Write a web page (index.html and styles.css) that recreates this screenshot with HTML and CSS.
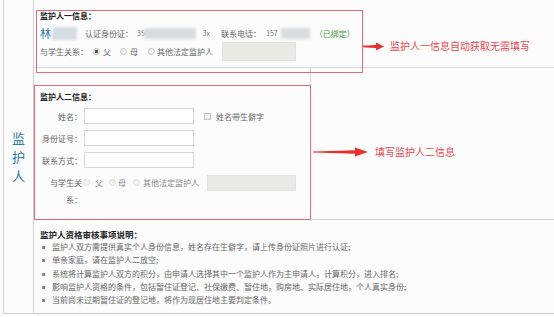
FILE: index.html
```html
<!DOCTYPE html>
<html lang="zh-CN">
<head>
  <meta charset="UTF-8">
  <title>监护人信息</title>
  <link rel="stylesheet" href="styles.css">
</head>
<body>
  <div class="hoja">
    <div class="tabla">
      <div class="lado"><span>监</span><span>护</span><span>人</span></div>

      <!-- 监护人一 -->
      <div class="fila1">
        <div class="info">
          <div class="titulo">监护人一信息：</div>
          <div class="linea">
            <span class="nombre">林</span>
            <span class="borroso b1"></span>
            <span class="etq e1">认证身份证：</span>
            <span class="num n1">350</span>
            <span class="borroso b2"></span>
            <span class="num n2">3x</span>
            <span class="etq e2">联系电话：</span>
            <span class="num n3">157</span>
            <span class="borroso b3"></span>
            <span class="verde">（已绑定）</span>
          </div>
          <div class="linea rel">
            <span class="etq">与学生关系：</span>
            <span class="radio on r1"></span><span class="op o1">父</span>
            <span class="radio r2"></span><span class="op o2">母</span>
            <span class="radio r3"></span><span class="op o3">其他法定监护人</span>
            <span class="caja c1"></span>
          </div>
        </div>
        <div class="aviso a1">
          <svg width="22" height="9" viewBox="0 0 22 9"><polygon points="0,3.8 14,3 14,0.5 22,4.5 14,8.5 14,6 0,5.2" fill="#e8302a"/></svg>
          <span>监护人一信息自动获取无需填写</span>
        </div>
      </div>

      <!-- 监护人二 -->
      <div class="fila2">
        <div class="titulo">监护人二信息：</div>
        <div class="campo">
          <span class="lbl">姓名：</span>
          <span class="input"></span>
          <span class="check"></span>
          <span class="op ck">姓名带生僻字</span>
        </div>
        <div class="campo">
          <span class="lbl">身份证号：</span>
          <span class="input"></span>
        </div>
        <div class="campo">
          <span class="lbl">联系方式：</span>
          <span class="input"></span>
        </div>
        <div class="campo rel2">
          <span class="lbl estrecho">与学生关系：</span>
          <div class="grupo">
            <span class="radio off q1"></span><span class="op gris p1">父</span>
            <span class="radio off q2"></span><span class="op gris p2">母</span>
            <span class="radio off q3"></span><span class="op gris p3">其他法定监护人</span>
            <span class="caja c2"></span>
          </div>
        </div>
      </div>
      <div class="fila2b">
        <div class="aviso a2">
          <svg width="55" height="10" viewBox="0 0 55 10"><polygon points="0,4.6 42,3.3 42,0.5 55,5 42,9.5 42,6.7 0,5.4" fill="#e8302a"/></svg>
          <span>填写监护人二信息</span>
        </div>
      </div>

      <!-- 说明 -->
      <div class="fila3">
        <div class="titulo t3">监护人资格审核事项说明：</div>
        <ul class="lista">
          <li>监护人双方需提供真实个人身份信息，姓名存在生僻字，请上传身份证照片进行认证;</li>
          <li>单亲家庭，请在监护人二放空;</li>
          <li>系统将计算监护人双方的积分，由申请人选择其中一个监护人作为主申请人，计算积分，进入排名;</li>
          <li>影响监护人资格的条件，包括暂住证登记、社保缴费、暂住地，购房地、实际居住地，个人真实身份;</li>
          <li>当前尚未过期暂住证的登记地，将作为现居住地主要判定条件。</li>
        </ul>
      </div>
    </div>

    <div class="marco m1"></div>
    <div class="marco m2"></div>
  </div>
</body>
</html>
```

FILE: styles.css
```css
* {
  box-sizing: border-box;
}

body {
  margin: 0;
  background-color: #fcfcfc;
  font-family: "Noto Sans CJK SC", sans-serif;
  font-size: 8px;
  color: #666;
}

.hoja {
  position: relative;
  width: 554px;
  height: 317px;
  overflow: hidden;
}

.tabla {
  margin-left: 3px;
  border-left: 1px solid #d2d2d2;
  display: grid;
  grid-template-columns: 30px 277px 1fr;
  grid-template-rows: 68px 152px 94px;
}

.lado {
  grid-row: 1 / 4;
  border-right: 1px solid #d2d2d2;
  border-bottom: 1px solid #cfcfcf;
  display: flex;
  flex-direction: column;
  align-items: center;
  justify-content: center;
  font-size: 13px;
  line-height: 19px;
  color: #2b7dad;
}

.titulo {
  font-weight: bold;
  color: #222;
  line-height: 11px;
  margin-left: 6px;
}

/* fila 1 */
.fila1 {
  grid-column: 2 / 4;
  border-bottom: 1px solid #d6d6d6;
  padding: 10px 0 0 0;
  display: flex;
}

.info {
  width: 328px;
}

.linea {
  display: flex;
  align-items: center;
  height: 16px;
  margin-top: 4px;
  margin-left: 6px;
  white-space: nowrap;
}

.linea.rel {
  height: 19px;
  margin-top: 1px;
}

.nombre {
  font-size: 11px;
  color: #2b7dad;
}

.borroso {
  display: inline-block;
  height: 11px;
  background-color: #d9dcde;
  filter: blur(1.5px);
}

.b1 { width: 25px; margin-left: 1px; background-color: #d4dde2; height: 13px; }
.b2 { width: 52px; margin-left: -5px; }
.b3 { width: 29px; margin-left: 3px; }

.num {
  font-size: 7px;
  color: #777;
}

.e1 { margin-left: 8px; }
.n1 { margin-left: 4px; }
.n2 { margin-left: 7px; }
.e2 { margin-left: 11px; }
.n3 { margin-left: 5px; }

.verde {
  margin-left: 5px;
  color: #3e9a3a;
}

.radio {
  display: inline-block;
  width: 7px;
  height: 7px;
  border-radius: 50%;
  border: 1px solid #c4c4c4;
  background-color: #f2f2f2;
}

.radio.on {
  background: radial-gradient(circle, #555 0 1.4px, #f2f2f2 2px);
}

.radio.off {
  border-color: #dcdcdc;
  background-color: #f3f3f3;
}

.r1 { margin-left: 5px; }
.o1 { margin-left: 3px; }
.r2 { margin-left: 9px; }
.o2 { margin-left: 3px; }
.r3 { margin-left: 10px; }
.o3 { margin-left: 2px; }

.op {
  color: #666;
}

.caja {
  display: inline-block;
  background-color: #e9e9e5;
  border: 1px solid #e2e2de;
}

.c1 {
  width: 74px;
  height: 19px;
  margin-left: 9px;
}

.aviso {
  display: flex;
  align-items: center;
  color: #e8454e;
  font-size: 10px;
  line-height: 12px;
  white-space: nowrap;
}

.a1 {
  margin-top: 30px;
  height: 12px;
}

.a1 span {
  margin-left: 6px;
}

/* fila 2 */
.fila2 {
  border-right: 1px solid #d6d6d6;
  border-bottom: 1px solid #d2d2d2;
  padding-top: 23px;
}

.fila2b {
  border-bottom: 1px solid #d2d2d2;
  padding: 78px 0 0 2px;
}

.a2 span {
  margin-left: 7px;
}

.campo {
  display: flex;
  align-items: center;
  height: 16px;
  margin-top: 6px;
  white-space: nowrap;
}

.lbl {
  width: 48px;
  text-align: right;
  color: #666;
}

.input {
  display: inline-block;
  width: 110px;
  height: 16px;
  margin-left: 2px;
  background-color: #fff;
  border: 1px solid #d6d6d6;
}

.check {
  display: inline-block;
  width: 7px;
  height: 7px;
  margin-left: 10px;
  border: 1px solid #c4c4c4;
  background-color: #f2f2f2;
}

.ck { margin-left: 5px; }

.campo.rel2 {
  height: auto;
  align-items: flex-start;
}

.lbl.estrecho {
  padding-left: 12px;
  white-space: normal;
  line-height: 17px;
}

.grupo {
  display: flex;
  align-items: center;
  height: 17px;
}

.gris { color: #888; }

.q1 { margin-left: 1px; }
.p1 { margin-left: 5px; }
.q2 { margin-left: 6px; }
.p2 { margin-left: 2px; }
.q3 { margin-left: 7px; }
.p3 { margin-left: 3px; }

.c2 {
  width: 89px;
  height: 16px;
  margin-left: 8px;
  margin-top: 1px;
  align-self: flex-start;
}

/* fila 3 */
.fila3 {
  grid-column: 2 / 4;
  border-bottom: 1px solid #cacaca;
  padding-top: 9px;
}

.t3 {
  font-size: 8.5px;
}

.lista {
  list-style: none;
  margin: 0;
  padding: 0;
  line-height: 13.3px;
  color: #666;
  white-space: nowrap;
}

.lista li {
  position: relative;
  padding-left: 18px;
}

.lista li::before {
  content: "";
  position: absolute;
  left: 8px;
  top: 6px;
  width: 3px;
  height: 3px;
  background-color: #888;
}

/* marcos rojos de la captura */
.marco {
  position: absolute;
  border: 1px solid #e06a78;
}

.m1 {
  left: 36px;
  top: 10px;
  width: 327px;
  height: 63px;
}

.m2 {
  left: 34px;
  top: 85px;
  width: 277px;
  height: 135px;
}
```
